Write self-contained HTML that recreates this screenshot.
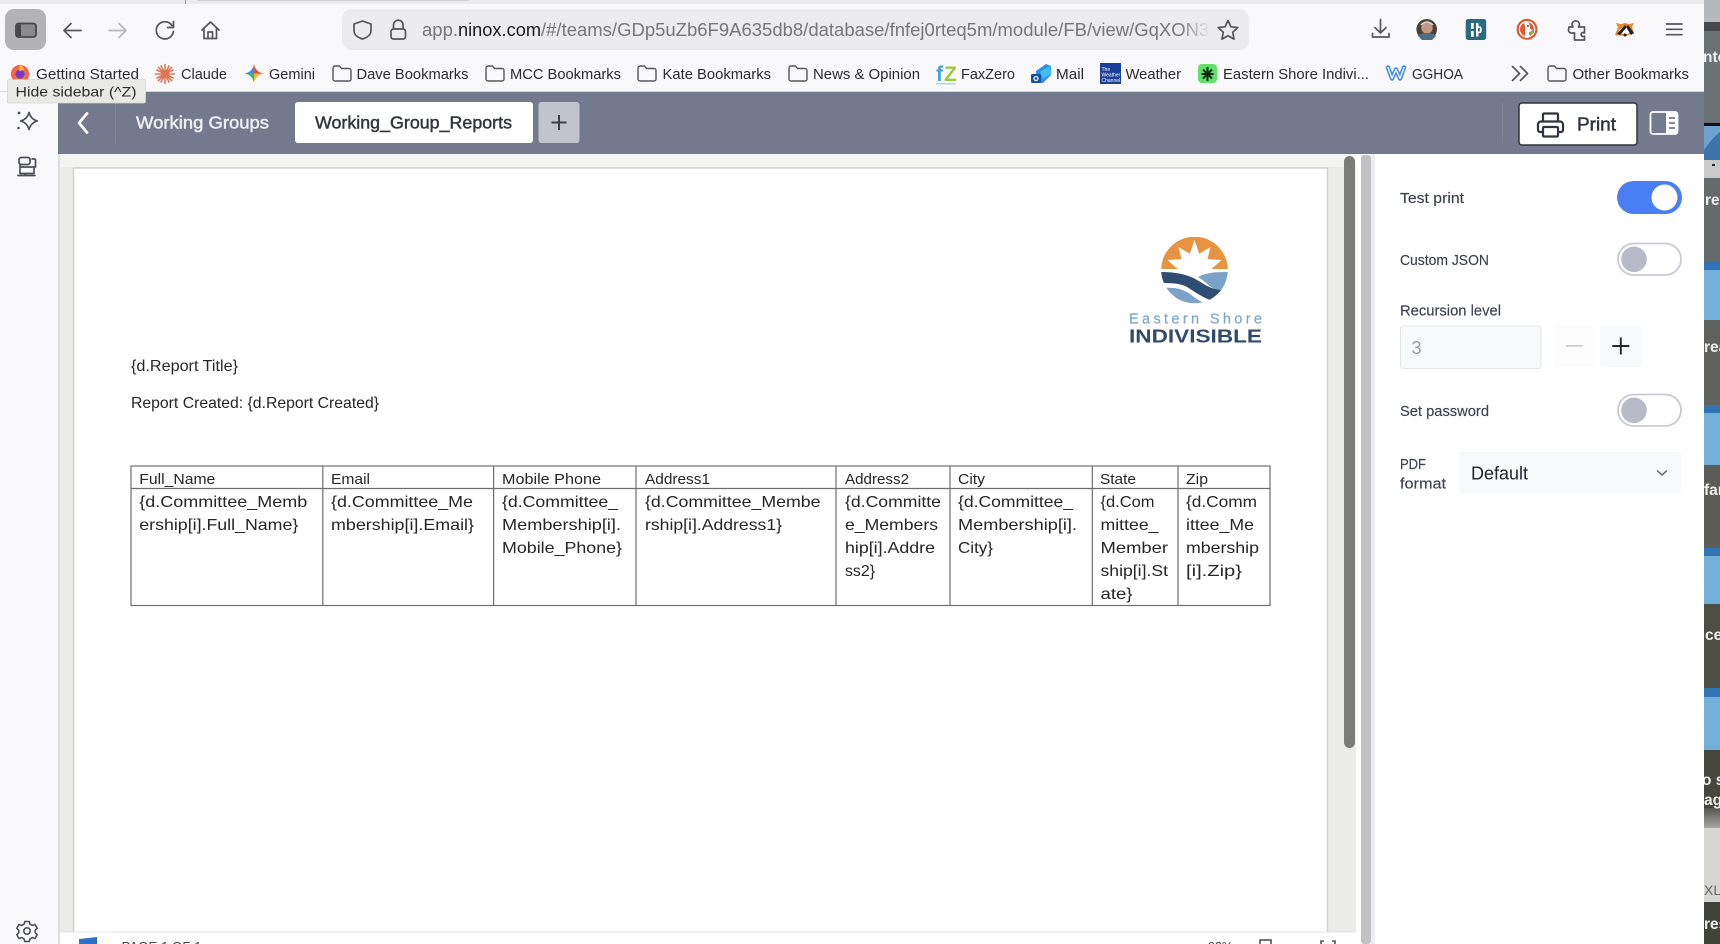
<!DOCTYPE html>
<html lang="en"><head><meta charset="utf-8"><title>Working_Group_Reports</title>
<style>
html,body{margin:0;padding:0;width:1720px;height:944px;overflow:hidden;background:#fff}
svg{display:block;filter:blur(.35px)}
text{font-family:"Liberation Sans",sans-serif;white-space:pre}
.bm{font-size:14.5px;fill:#2b2b30}
.c{font-family:"Liberation Sans",sans-serif;font-size:15.8px;fill:#262626}
.h{font-size:14.8px}
.p{font-size:14.5px;fill:#3c4150;stroke:#3c4150;stroke-width:.15px}
.i{fill:none;stroke:#55555a;stroke-width:1.7;stroke-linecap:round;stroke-linejoin:round}
.k{font-size:15.5px;font-weight:bold;fill:#eeeeee}
</style></head><body>
<svg width="1720" height="944" viewBox="0 0 1720 944" xmlns="http://www.w3.org/2000/svg">
<defs>
<clipPath id="lg"><circle cx="1194.5" cy="270" r="33.3"/></clipPath>
<clipPath id="st"><rect x="1704" y="0" width="16" height="944"/></clipPath>
<linearGradient id="fd" x1="0" x2="1"><stop offset="0" stop-color="#ececee" stop-opacity="0"/><stop offset="1" stop-color="#ececee"/></linearGradient>
<linearGradient id="sp" x1="0" x2="0" y1="0" y2="1"><stop offset="0" stop-color="#55564f"/><stop offset="1" stop-color="#a8a8a6"/></linearGradient>
<radialGradient id="ff"><stop offset="0" stop-color="#6a3ad0"/><stop offset=".5" stop-color="#7a3fd0"/><stop offset=".55" stop-color="#ff7a2a"/><stop offset="1" stop-color="#ff4d4d"/></radialGradient>
</defs>

<!-- desktop strip -->
<rect x="1704" y="0" width="16" height="944" fill="#62686a"/>
<g clip-path="url(#st)">
<rect x="1704" y="0" width="16" height="22" fill="#b4b9bb"/><rect x="1704" y="22" width="16" height="9" fill="#45484a"/>
<rect x="1704" y="31" width="16" height="92" fill="#6b7275"/>
<rect x="1704" y="123" width="16" height="3" fill="#101215"/><rect x="1704" y="126" width="16" height="34" fill="#3f73ab"/><path d="M1704 150q8-12 16-18v-6h-16z" fill="#6ea3cf"/><rect x="1704" y="160" width="16" height="18" fill="#c9c9c9"/><rect x="1712" y="164" width="3" height="2" fill="#222"/>
<rect x="1704" y="178" width="16" height="84" fill="#656b6d"/><rect x="1704" y="262" width="16" height="8" fill="#2f74b4"/><rect x="1704" y="270" width="16" height="50" fill="#72b0dc"/>
<rect x="1704" y="320" width="16" height="85" fill="#5f625f"/><rect x="1704" y="405" width="16" height="8" fill="#2f74b4"/><rect x="1704" y="413" width="16" height="52" fill="#72b0dc"/>
<rect x="1704" y="465" width="16" height="83" fill="#5a5c55"/><rect x="1704" y="548" width="16" height="8" fill="#2f74b4"/><rect x="1704" y="556" width="16" height="48" fill="#72b0dc"/>
<rect x="1704" y="604" width="16" height="84" fill="#4d4f46"/><rect x="1704" y="688" width="16" height="9" fill="#2f74b4"/><rect x="1704" y="697" width="16" height="53" fill="#72b0dc"/>
<rect x="1704" y="750" width="16" height="58" fill="#45463e"/><rect x="1704" y="808" width="16" height="20" fill="url(#sp)"/><rect x="1704" y="828" width="16" height="74" fill="#d6d6d4"/><rect x="1704" y="902" width="16" height="42" fill="#3f4238"/>
<text class="k" x="1703" y="62">nto</text><text class="k" x="1705" y="205">re</text><text class="k" x="1704" y="352">rea</text><text class="k" x="1704" y="495">far</text><text class="k" x="1705" y="640">ce</text><text class="k" x="1702" y="785">o s</text><text class="k" x="1704" y="805">ag</text><text x="1704" y="895" font-size="14" fill="#666">XLS</text><text class="k" x="1704" y="929">res</text>
</g>

<!-- browser chrome -->
<rect width="1704" height="92" fill="#f9f9fb"/>
<rect width="1704" height="4" fill="#ebebed"/>
<rect x="185" y="0" width="1" height="4" fill="#9a9a9c"/>
<rect x="197" y="0" width="272" height="1" fill="#d4d4d6"/>
<rect y="91" width="1704" height="1" fill="#d9d9db"/>

<rect x="5" y="9" width="41" height="41" rx="9" fill="#b3b3b5"/>
<rect x="16" y="23.5" width="20" height="13.5" rx="2.5" fill="#8a8a8d" stroke="#47474b" stroke-width="1.8"/>
<rect x="17" y="24.5" width="4" height="11.5" fill="#47474b"/>
<path class="i" d="M81 30.5H64M71 23.5l-7 7 7 7"/>
<path class="i" style="stroke:#b8b8bb" d="M109 30.5h17M119 23.5l7 7-7 7"/>
<path class="i" d="M172 25.5a8.6 8.6 0 1 0 1.4 6M173.5 21.5v6h-6"/>
<path class="i" d="M202 30l8.5-8 8.5 8M204 28v10.5h12.500V28M208 38.500v-6.500h4.500v6.500"/>
<rect x="342" y="9" width="907" height="41" rx="10" fill="#ececee"/>
<path class="i" d="M362.500 21l8.500 3v6.500c0 4-3.500 7-8.500 8.500-5-1.500-8.500-4.500-8.500-8.500V24z"/>
<rect class="i" x="391" y="29" width="14.500" height="10" rx="2.500"/><path class="i" d="M393.500 29v-4a4.800 4.800 0 0 1 9.600 0v4"/>
<text x="422" y="36" font-size="18" fill="#77777b" textLength="36" lengthAdjust="spacingAndGlyphs">app.</text>
<text x="458" y="36" font-size="18" fill="#1c1c20" textLength="83" lengthAdjust="spacingAndGlyphs">ninox.com</text>
<text x="541" y="36" font-size="18" fill="#77777b" textLength="658" lengthAdjust="spacingAndGlyphs">/#/teams/GDp5uZb6F9A635db8/database/fnfej0rteq5m/module/FB/view/GqXON</text>
<text x="1199" y="36" font-size="18" fill="#77777b">3</text>
<rect x="1180" y="10" width="30" height="39" fill="url(#fd)"/>
<path class="i" d="M1228 20.500l2.900 6.300 6.900.8-5.100 4.700 1.400 6.800-6.100-3.400-6.100 3.400 1.400-6.800-5.100-4.700 6.900-.8z"/>
<path class="i" d="M1380.500 19.500v13M1375 27.500l5.500 5.500 5.500-5.500M1372.500 33.500v3.500h16.500v-3.500"/>
<circle cx="1426.700" cy="29.300" r="10.300" fill="#4a4038"/><circle cx="1427" cy="28" r="5.700" fill="#c59a85"/><path d="M1418 36c3-4 14-4 18 0l-4 4h-10z" fill="#4f6f80"/><path d="M1421 25q6-6 12 0" fill="none" stroke="#ddd" stroke-width="1.500"/>
<rect x="1465.700" y="19" width="20.500" height="21" rx="2.500" fill="#2b6a7e"/><rect x="1471" y="23" width="2.700" height="6" fill="#fff"/><rect x="1471" y="31" width="2.700" height="6" fill="#fff"/><path d="M1476 23h2.500v3.500h2.500q1.500 3.500 0 6.500h-2.500v3.500h-2.500z" fill="#fff"/><rect x="1478" y="28" width="1.800" height="3.500" fill="#2b6a7e"/>
<circle cx="1527" cy="29.300" r="10.500" fill="#de5833"/><circle cx="1527" cy="29.300" r="8.300" fill="#fff"/><circle cx="1527" cy="29.300" r="7" fill="#de5833"/><path d="M1524 22q5-1 6 4v3l3 1-3 2v4l-2 2h-3q1-9-1-16z" fill="#fff"/><path d="M1529 32l5-1v2l-5 2z" fill="#60c040"/><circle cx="1528" cy="26" r="1" fill="#334"/>
<path class="i" d="M1569 27h4q-1-2-1-3a3.800 3.800 0 0 1 7.500 0q0 1-1 3h6v6q-2-1-3 0-.7 2 .2 3 1.500 1 2.800.200V40h-10v-7h-2.500a3 3 0 0 1-3.500-3z"/>
<path d="M1615 35l3-8-2-4 5 1 4-1 4 1 5-1-2 4 2 6-8 3z" fill="#e68a2e"/><path d="M1619 30l6-4 6 4-3 4h-6z" fill="#fff"/><path d="M1617 34l8-9 2 2-7 8zM1634 33l-6-8-2 2 5 8z" fill="#222"/><circle cx="1625" cy="35" r="1.500" fill="#222"/>
<path class="i" d="M1666.500 24h15.500M1666.500 29.300h15.500M1666.500 34.700h15.500"/>

<!-- bookmarks -->
<circle cx="20" cy="74" r="9" fill="url(#ff)"/><path d="M20 64q4 3 4 6l-5 1z" fill="#ffb92e"/>
<text class="bm" x="36" y="79" textLength="103" lengthAdjust="spacingAndGlyphs">Getting Started</text>
<g stroke="#d97757" stroke-width="1.600" stroke-linecap="round"><path d="M155.500 74h19M165 64.500v19M158.300 67.300l13.400 13.400M171.700 67.300l-13.400 13.400M157 70l16 8M157 78l16-8M161 66l8 16M169 66l-8 16"/></g>
<text class="bm" x="181" y="79" textLength="46" lengthAdjust="spacingAndGlyphs">Claude</text>
<path d="M254 64q1.500 8 9.500 9.500h-9.500z" fill="#e8503f"/><path d="M254 64q-1.500 8-9.500 9.500h9.500z" fill="#3f8cf0"/><path d="M254 83q1.500-8 9.500-9.500h-9.500z" fill="#f4b53a"/><path d="M254 83q-1.500-8-9.500-9.500h9.500z" fill="#3cba6a"/>
<text class="bm" x="269" y="79" textLength="46" lengthAdjust="spacingAndGlyphs">Gemini</text>
<path id="f1" class="i" style="stroke-width:1.400" d="M333 68a2 2 0 0 1 2-2h4.500l2 2.500h7.500a2 2 0 0 1 2 2v8.500a2 2 0 0 1-2 2h-14a2 2 0 0 1-2-2z"/>
<text class="bm" x="356.500" y="79" textLength="112" lengthAdjust="spacingAndGlyphs">Dave Bookmarks</text>
<use href="#f1" x="153"/>
<text class="bm" x="510" y="79" textLength="111" lengthAdjust="spacingAndGlyphs">MCC Bookmarks</text>
<use href="#f1" x="305"/>
<text class="bm" x="662.500" y="79" textLength="108.500" lengthAdjust="spacingAndGlyphs">Kate Bookmarks</text>
<use href="#f1" x="456"/>
<text class="bm" x="813" y="79" textLength="107" lengthAdjust="spacingAndGlyphs">News &amp; Opinion</text>
<text x="936" y="81" font-size="21" font-weight="bold" fill="#4aa3d8">f</text><text x="944" y="81" font-size="21" font-weight="bold" fill="#9dc843">Z</text><rect x="936" y="83" width="20" height="1.500" fill="#a8d8ee"/>
<text class="bm" x="961" y="79" textLength="54" lengthAdjust="spacingAndGlyphs">FaxZero</text>
<path d="M1036 71l10-7 5 2v9l-8 8h-7z" fill="#2f8fe6"/><path d="M1040 72l10-6 1 8-8 5z" fill="#3fc0f0"/><rect x="1031" y="74" width="10" height="9" rx="1.500" fill="#1450b0"/><circle cx="1036" cy="78.500" r="2" fill="none" stroke="#fff" stroke-width="1.200"/>
<text class="bm" x="1056" y="79" textLength="28" lengthAdjust="spacingAndGlyphs">Mail</text>
<rect x="1100" y="63" width="21" height="21" fill="#1b3f98"/><text x="1101.500" y="71" font-size="5" fill="#fff">The</text><text x="1101.500" y="76.500" font-size="5" fill="#fff">Weather</text><text x="1101.500" y="82" font-size="5" fill="#fff">Channel</text>
<text class="bm" x="1125.500" y="79" textLength="55.500" lengthAdjust="spacingAndGlyphs">Weather</text>
<rect x="1198" y="64" width="19" height="19" rx="4" fill="#62e06c"/><path d="M1207.500 67v14M1201.500 74h12M1203 69.500l9 9M1212 69.500l-9 9" stroke="#0c2c12" stroke-width="2"/>
<text class="bm" x="1223" y="79" textLength="146" lengthAdjust="spacingAndGlyphs">Eastern Shore Indivi...</text>
<path d="M1388 67.500l4 11 4-9 4 9 4-11" fill="none" stroke="#3d8ae8" stroke-width="4.400" stroke-linejoin="round" stroke-linecap="round"/>
<path d="M1388 67.500l4 11 4-9 4 9 4-11" fill="none" stroke="#fff" stroke-width="1.300" stroke-linejoin="round" stroke-linecap="round"/>
<text class="bm" x="1412" y="79" textLength="51" lengthAdjust="spacingAndGlyphs">GGHOA</text>
<path class="i" d="M1512.500 66.500l7 7-7 7M1520.500 66.500l7 7-7 7"/>
<use href="#f1" x="1215"/>
<text class="bm" x="1572.500" y="79" textLength="116.500" lengthAdjust="spacingAndGlyphs">Other Bookmarks</text>

<!-- left sidebar -->
<rect y="92" width="58" height="852" fill="#f9f9fb"/>
<path class="i" style="stroke:#4c4f58;stroke-width:1.600" d="M29 112.500q2 7 8.500 8.500-6.500 1.500-8.500 8.500-2-7-8.500-8.500 6.500-1.500 8.500-8.500z"/>
<circle cx="19" cy="113" r="1.400" fill="#4c4f58"/><circle cx="18.500" cy="128" r="1.300" fill="#4c4f58"/>
<g class="i" style="stroke:#4c4f58"><rect x="19" y="157.500" width="11" height="7" rx="2" fill="none"/><path d="M32 159h2.500a1 1 0 0 1 1 1v7H20M20 164.500v9h14v-6M25 173.500v2M18 175.500h17"/></g>
<g class="i" style="stroke:#4c4f58;stroke-width:1.600"><circle cx="27" cy="931" r="3.200"/><path d="M24.800 921.500h4.400l.7 2.700 2.500 1.200 2.600-.9 2.200 3.800-2 1.900v2.600l2 1.900-2.200 3.800-2.600-.9-2.500 1.300-.7 2.600h-4.400l-.7-2.600-2.500-1.300-2.600.9-2.200-3.800 2-1.900v-2.600l-2-1.900 2.200-3.800 2.600.9 2.500-1.200z"/></g>

<!-- header -->
<rect x="58" y="92" width="1646" height="62" fill="#747a8d"/>
<path d="M87 113.500l-8 9.500 8 9.500" fill="none" stroke="#fff" stroke-width="2.800" stroke-linecap="round" stroke-linejoin="round"/>
<rect x="115" y="102" width="1" height="41" fill="#7f8597"/>
<text x="136" y="128.700" font-size="17.500" fill="#eef0f4" stroke="#eef0f4" stroke-width=".45" textLength="133" lengthAdjust="spacingAndGlyphs">Working Groups</text>
<rect x="295" y="102" width="238" height="41" rx="3" fill="#fff"/>
<text x="315" y="128.700" font-size="17.500" fill="#32353d" stroke="#32353d" stroke-width=".45" textLength="197" lengthAdjust="spacingAndGlyphs">Working_Group_Reports</text>
<rect x="538.500" y="102" width="41" height="41" rx="3" fill="#c1c4ce"/>
<path d="M559 115v15M551.500 122.500h15" stroke="#3a3e4a" stroke-width="2"/>
<rect x="1502" y="102" width="1" height="41" fill="#7f8597"/>
<rect x="1519" y="103" width="118" height="42" rx="3" fill="#fff" stroke="#30343f" stroke-width="1.500"/>
<g fill="none" stroke="#30343f" stroke-width="2.200" stroke-linejoin="round"><path d="M1543 122v-7.500a1 1 0 0 1 1-1h13a1 1 0 0 1 1 1v7.500"/><path d="M1543 132h-3a2 2 0 0 1-2-2v-6a3 3 0 0 1 3-2.500h19a3 3 0 0 1 3 2.500v6a2 2 0 0 1-2 2h-3"/><rect x="1543" y="127" width="15" height="9.500" rx="1"/></g>
<text x="1577" y="130.700" font-size="18.500" fill="#30343f" stroke="#30343f" stroke-width=".5" textLength="39" lengthAdjust="spacingAndGlyphs">Print</text>
<rect x="1650.500" y="112" width="27" height="22" rx="2.500" fill="none" stroke="#fff" stroke-width="1.800"/>
<path d="M1666 112h9a2.500 2.500 0 0 1 2.500 2.500v17a2.500 2.500 0 0 1-2.500 2.500h-9z" fill="#fff"/>
<path d="M1669 118h6M1669 123h6M1669 128h6" stroke="#747a8d" stroke-width="1.800"/>

<!-- document area -->
<rect x="58" y="154" width="1298" height="790" fill="#ebebe9"/>
<rect x="58" y="154" width="1298" height="13" fill="#f4f4f3"/>
<rect x="58" y="154" width="2" height="790" fill="#dcdcdc"/>
<rect x="73.500" y="168" width="1254" height="780" fill="#fff" stroke="#d0d0d0" stroke-width="1.500"/>

<!-- logo -->
<g clip-path="url(#lg)">
<rect x="1161" y="237" width="67" height="32" fill="#e8933f"/>
<polygon points="1177.500,269 1167.500,260 1181.500,259.100 1178.500,247 1189.800,253.700 1194.500,240 1199.200,253.700 1210.500,247 1207.500,259.100 1221.500,260 1211.500,269" fill="#fff"/>
<path d="M1198 277C1207 272 1218 272 1228 272V289C1222 291 1218 291 1214 289C1208 285 1203 280 1198 277Z" fill="#7ba3c7"/>
<path d="M1161 272C1175 272 1187 274 1197 280C1206 285 1212 291 1228 290L1213 301C1205 299 1195 292 1187 287C1180 283 1170 283 1161 283Z" fill="#2f4d70"/>
<path d="M1163 288C1175 287 1183 289 1190 294C1195 298 1200 302 1208 304L1190 308L1170 300Z" fill="#7ba3c7"/>
</g>
<text x="1129" y="323.500" font-size="14.500" fill="#7ea6c9" stroke="#7ea6c9" stroke-width=".2" textLength="133">Eastern Shore</text>
<text x="1129" y="342.700" font-size="18.500" font-weight="bold" fill="#2f4a6b" textLength="133" lengthAdjust="spacingAndGlyphs">INDIVISIBLE</text>

<text class="c" x="131" y="371" textLength="107" lengthAdjust="spacingAndGlyphs">{d.Report Title}</text>
<text class="c" x="131" y="408" textLength="248" lengthAdjust="spacingAndGlyphs">Report Created: {d.Report Created}</text>

<!-- table -->
<g fill="none" stroke="#6e6e6e" stroke-width="1.200">
<rect x="131" y="466" width="1139" height="139.500"/>
<path d="M131 488.500H1270M322.800 466v139.500M493.600 466v139.500M636 466v139.500M836 466v139.500M950 466v139.500M1092.300 466v139.500M1178 466v139.500"/>
</g>
<g class="c">
<text class="c h" x="139.300" y="484" textLength="76" lengthAdjust="spacingAndGlyphs">Full_Name</text>
<text class="c h" x="331" y="484" textLength="39" lengthAdjust="spacingAndGlyphs">Email</text>
<text class="c h" x="502" y="484" textLength="99" lengthAdjust="spacingAndGlyphs">Mobile Phone</text>
<text class="c h" x="645" y="484" textLength="65" lengthAdjust="spacingAndGlyphs">Address1</text>
<text class="c h" x="845" y="484" textLength="64" lengthAdjust="spacingAndGlyphs">Address2</text>
<text class="c h" x="958" y="484" textLength="27" lengthAdjust="spacingAndGlyphs">City</text>
<text class="c h" x="1100" y="484" textLength="36" lengthAdjust="spacingAndGlyphs">State</text>
<text class="c h" x="1186" y="484" textLength="22" lengthAdjust="spacingAndGlyphs">Zip</text>

<text class="c" x="139.300" y="507" textLength="168" lengthAdjust="spacingAndGlyphs">{d.Committee_Memb</text>
<text class="c" x="139.300" y="530" textLength="159" lengthAdjust="spacingAndGlyphs">ership[i].Full_Name}</text>
<text class="c" x="331" y="507" textLength="142" lengthAdjust="spacingAndGlyphs">{d.Committee_Me</text>
<text class="c" x="331" y="530" textLength="143" lengthAdjust="spacingAndGlyphs">mbership[i].Email}</text>
<text class="c" x="502" y="507" textLength="116" lengthAdjust="spacingAndGlyphs">{d.Committee_</text>
<text class="c" x="502" y="530" textLength="119" lengthAdjust="spacingAndGlyphs">Membership[i].</text>
<text class="c" x="502" y="553" textLength="120" lengthAdjust="spacingAndGlyphs">Mobile_Phone}</text>
<text class="c" x="645" y="507" textLength="175.500" lengthAdjust="spacingAndGlyphs">{d.Committee_Membe</text>
<text class="c" x="645" y="530" textLength="137" lengthAdjust="spacingAndGlyphs">rship[i].Address1}</text>
<text class="c" x="845" y="507" textLength="96" lengthAdjust="spacingAndGlyphs">{d.Committe</text>
<text class="c" x="845" y="530" textLength="93" lengthAdjust="spacingAndGlyphs">e_Members</text>
<text class="c" x="845" y="553" textLength="90" lengthAdjust="spacingAndGlyphs">hip[i].Addre</text>
<text class="c" x="845" y="576" textLength="30" lengthAdjust="spacingAndGlyphs">ss2}</text>
<text class="c" x="958" y="507" textLength="115" lengthAdjust="spacingAndGlyphs">{d.Committee_</text>
<text class="c" x="958" y="530" textLength="119" lengthAdjust="spacingAndGlyphs">Membership[i].</text>
<text class="c" x="958" y="553" textLength="35" lengthAdjust="spacingAndGlyphs">City}</text>
<text class="c" x="1100.500" y="507" textLength="54" lengthAdjust="spacingAndGlyphs">{d.Com</text>
<text class="c" x="1100.500" y="530" textLength="58" lengthAdjust="spacingAndGlyphs">mittee_</text>
<text class="c" x="1100.500" y="553" textLength="67.500" lengthAdjust="spacingAndGlyphs">Member</text>
<text class="c" x="1100.500" y="576" textLength="67.500" lengthAdjust="spacingAndGlyphs">ship[i].St</text>
<text class="c" x="1100.500" y="599" textLength="32" lengthAdjust="spacingAndGlyphs">ate}</text>
<text class="c" x="1186" y="507" textLength="71" lengthAdjust="spacingAndGlyphs">{d.Comm</text>
<text class="c" x="1186" y="530" textLength="68" lengthAdjust="spacingAndGlyphs">ittee_Me</text>
<text class="c" x="1186" y="553" textLength="73" lengthAdjust="spacingAndGlyphs">mbership</text>
<text class="c" x="1186" y="576" textLength="56" lengthAdjust="spacingAndGlyphs">[i].Zip}</text>
</g>

<!-- status bar -->
<rect x="60" y="932" width="1296" height="12" fill="#fff"/>
<rect x="60" y="931.500" width="1296" height="1" fill="#e3e3e3"/>
<path d="M79 939l18-2v7H79z" fill="#2f6fc8"/>
<text x="121.500" y="951" font-size="13" fill="#444" textLength="80" lengthAdjust="spacingAndGlyphs">PAGE 1 OF 1</text>
<text x="1208" y="951" font-size="13" fill="#444" textLength="25" lengthAdjust="spacingAndGlyphs">92%</text>
<rect x="1260" y="940" width="11" height="8" fill="none" stroke="#555" stroke-width="1.600"/>
<path d="M1321 944v-3h3M1335 944v-3h-3" fill="none" stroke="#555" stroke-width="1.600"/>

<!-- scrollbars -->
<rect x="1344" y="156" width="11" height="592" rx="5.500" fill="#7b7b79"/>
<rect x="1356" y="154" width="20" height="790" fill="#fff"/>
<rect x="1361" y="155" width="10" height="789" rx="3" fill="#c2c2c2"/>
<rect x="1371" y="154" width="4" height="790" fill="#ecedf0"/>

<!-- right panel -->
<rect x="1375.500" y="154" width="328.500" height="790" fill="#fff"/>
<text class="p" x="1400" y="203" textLength="64" lengthAdjust="spacingAndGlyphs">Test print</text>
<rect x="1617" y="181" width="65" height="33" rx="16.500" fill="#4a7ef5"/><circle cx="1664.500" cy="197.500" r="13" fill="#fff"/>
<text class="p" x="1400" y="265" textLength="89" lengthAdjust="spacingAndGlyphs">Custom JSON</text>
<rect x="1618" y="243.500" width="63" height="31.500" rx="15.750" fill="#fff" stroke="#c8c9d6" stroke-width="1.800"/><circle cx="1634" cy="259.300" r="12.800" fill="#b9bac8"/>
<text class="p" x="1400" y="315.700" textLength="101" lengthAdjust="spacingAndGlyphs">Recursion level</text>
<rect x="1400.500" y="326" width="140.500" height="42.500" rx="3" fill="#f8f9fb" stroke="#e4e5ec"/>
<text x="1411.500" y="354" font-size="18" fill="#999ca6">3</text>
<rect x="1555" y="326" width="39" height="41" rx="3" fill="#fcfcfd"/><rect x="1566" y="345" width="17" height="1.800" fill="#cfcfd3"/>
<rect x="1600" y="326" width="41.500" height="41" rx="3" fill="#f8f9fb"/><path d="M1620.800 337.500v17M1612.300 346h17" stroke="#22252c" stroke-width="1.900"/>
<text class="p" x="1400" y="416" textLength="89" lengthAdjust="spacingAndGlyphs">Set password</text>
<rect x="1618" y="394.500" width="63" height="31.500" rx="15.750" fill="#fff" stroke="#c8c9d6" stroke-width="1.800"/><circle cx="1634" cy="410.300" r="12.800" fill="#b9bac8"/>
<text class="p" x="1400" y="469" textLength="26" lengthAdjust="spacingAndGlyphs">PDF</text>
<text class="p" x="1400" y="488.500" textLength="46" lengthAdjust="spacingAndGlyphs">format</text>
<rect x="1459.500" y="452" width="221.500" height="42" rx="3" fill="#f8f9fb"/>
<text x="1471" y="479.500" font-size="18" fill="#22252c" textLength="57" lengthAdjust="spacingAndGlyphs">Default</text>
<path d="M1657.500 471l4.500 4 4.500-4" fill="none" stroke="#70747f" stroke-width="1.700" stroke-linecap="round" stroke-linejoin="round"/>

<!-- tooltip -->
<rect x="7.500" y="79.500" width="138" height="23.500" rx="1.500" fill="#e9eae6" stroke="#d4d5d1" stroke-width=".8"/>
<text x="15.500" y="96.500" font-size="14" fill="#2b2b2b" textLength="121" lengthAdjust="spacingAndGlyphs">Hide sidebar (^Z)</text>
</svg>
</body></html>
